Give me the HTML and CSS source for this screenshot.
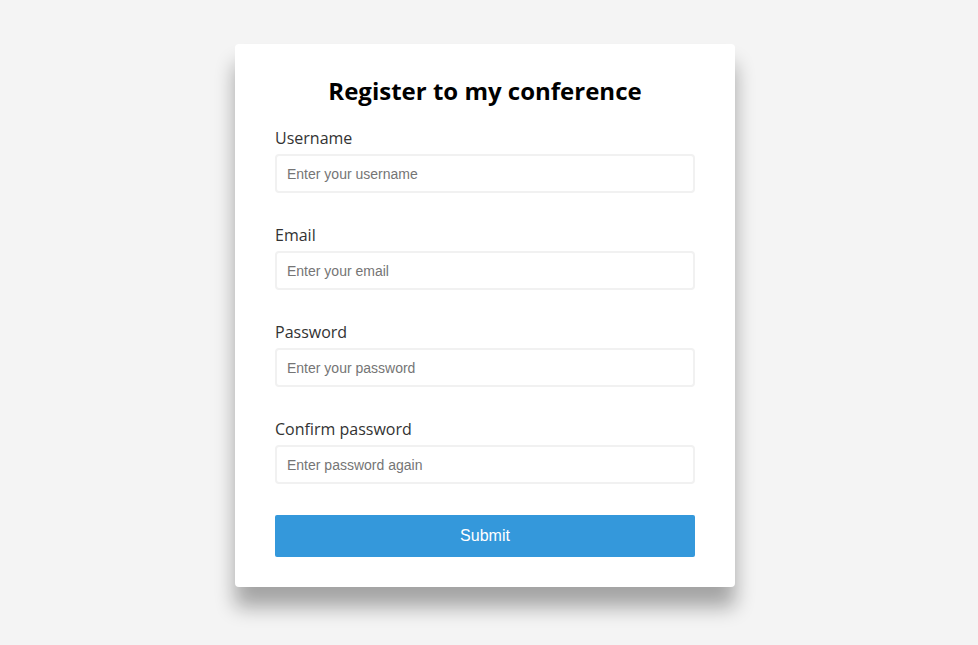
FILE: index.html
```html
<!DOCTYPE html>
<html lang="en">
<head>
<meta charset="utf-8">
<title>Register</title>
<link rel="stylesheet" href="styles.css">
</head>
<body>
<main class="page">
  <form class="card">
    <h1 class="title">Register to my conference</h1>
    <div class="field">
      <label class="label" for="u">Username</label>
      <input class="input" id="u" type="text" placeholder="Enter your username">
    </div>
    <div class="field">
      <label class="label" for="e">Email</label>
      <input class="input" id="e" type="text" placeholder="Enter your email">
    </div>
    <div class="field">
      <label class="label" for="p">Password</label>
      <input class="input" id="p" type="password" placeholder="Enter your password">
    </div>
    <div class="field">
      <label class="label" for="c">Confirm password</label>
      <input class="input" id="c" type="password" placeholder="Enter password again">
    </div>
    <button class="submit" type="button">Submit</button>
  </form>
</main>
</body>
</html>
```
FILE: styles.css
```css
* { box-sizing: border-box; }
html, body { margin: 0; padding: 0; }
body {
  background: #f4f4f4;
  font-family: "Open Sans", sans-serif;
  height: 645px;
}
.page {
  display: flex;
  justify-content: center;
  padding: 44px 8px 0 0;
}
.card {
  width: 500px;
  background: #fff;
  border-radius: 4px;
  box-shadow: 0 20px 20px rgba(0, 0, 0, 0.33);
  padding: 30px 40px 30px;
  display: flex;
  flex-direction: column;
}
.title {
  margin: 0 0 20px;
  font-size: 24px;
  line-height: 33px;
  font-weight: 700;
  text-align: center;
  color: #000;
}
.field {
  display: flex;
  flex-direction: column;
  gap: 5px;
  margin-bottom: 31px;
}
.label {
  font-size: 16px;
  line-height: 22px;
  color: #333;
}
.input {
  height: 39px;
  border: 2px solid #f1f1f1;
  border-radius: 4px;
  padding: 0 10px;
  font-family: "Liberation Sans", Arial, sans-serif;
  font-size: 14px;
  color: #333;
  outline: none;
}
.input::placeholder { color: #757575; }
.submit {
  height: 42px;
  border: none;
  border-radius: 2px;
  background: #3498db;
  color: #fff;
  font-family: "Liberation Sans", Arial, sans-serif;
  font-size: 16px;
}
```
